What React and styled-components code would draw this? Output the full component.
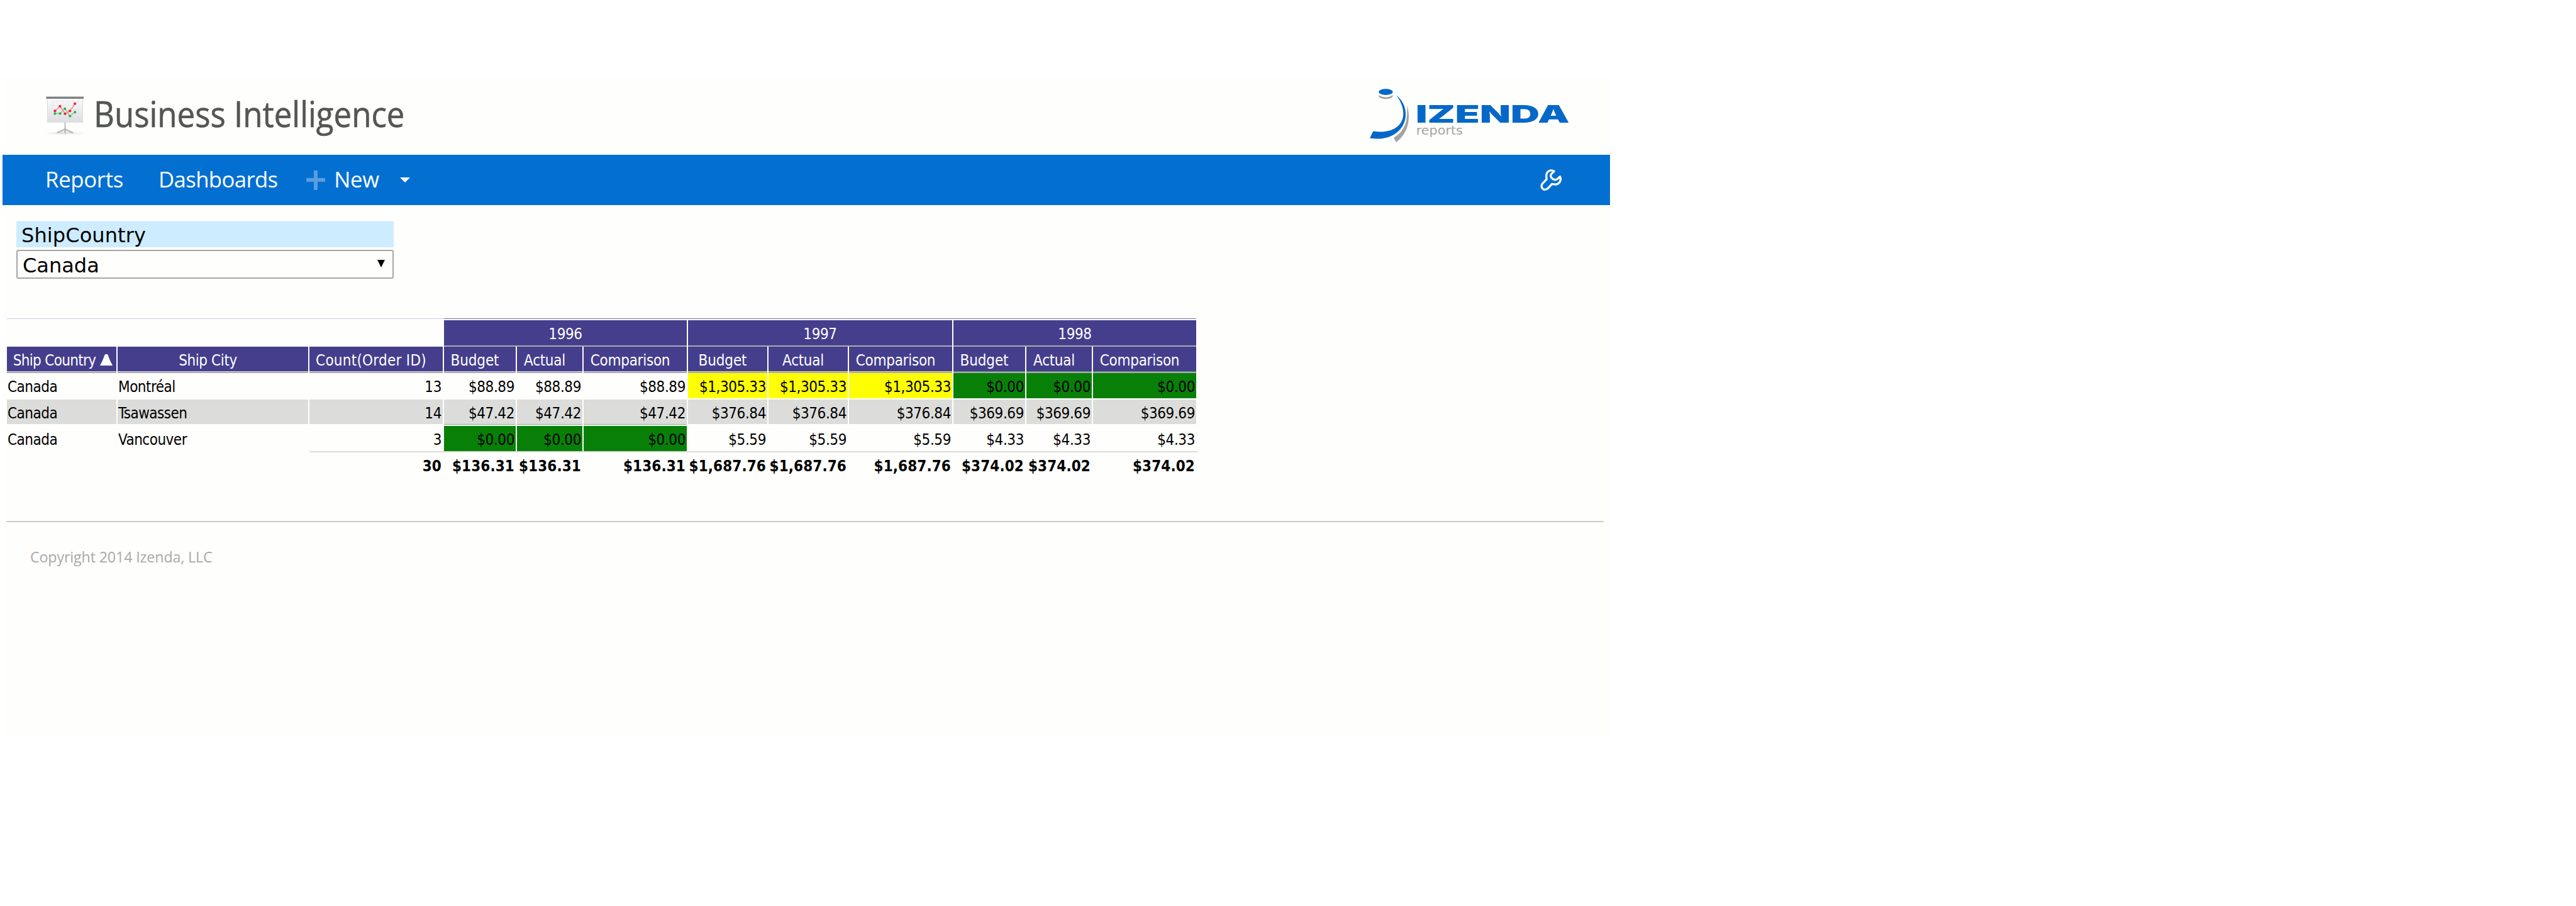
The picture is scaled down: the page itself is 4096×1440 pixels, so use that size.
import React from "react";
import styled, { createGlobalStyle } from "styled-components";

const sans = `"Open Sans", "Noto Sans", sans-serif`;
const grid = `"DejaVu Sans Condensed", "DejaVu Sans", sans-serif`;
const green = "#088008";
const yellow = "#ffff00";
const purple = "#453e8d";

const GlobalStyle = createGlobalStyle`
  *, *::before, *::after { box-sizing: border-box; }
  html, body { margin: 0; background: #fff; }
  svg { display: block; flex: none; }
`;

const Page = styled.div`
  width: 4096px;
  height: 1440px;
  padding: 123px 0 0 4px;
  overflow: hidden;
`;

const Panel = styled.main`
  display: flex;
  flex-direction: column;
  width: 2556px;
  height: 1049px;
  background: #fefefc;
`;

const Header = styled.header`
  display: flex;
  height: 123px;
  padding: 9px 66px 0 60px;
`;

const BoardIcon = styled.svg`
  margin-top: 12px;
`;

const Title = styled.h1`
  margin: -9px auto 0 1px;
  font: 400 56px/115px ${sans};
  color: #545653;
  white-space: nowrap;
  -webkit-text-stroke: 0.6px #545653;
  transform: scaleX(0.91);
  transform-origin: 0 0;
`;

const Nav = styled.nav`
  display: flex;
  align-items: center;
  height: 80px;
  padding: 0 64px 0 68px;
  background: #0370d1;
`;

const NavLink = styled.a`
  width: ${(p) => p.$width}px;
  height: 80px;
  font: 400 34.7px/77px ${sans};
  letter-spacing: ${(p) => p.$track}px;
  color: #fff;
`;

const PlusIcon = styled.svg`
  margin-right: 14px;
`;

const ToolsButton = styled.span`
  margin-left: auto;
`;

const Filter = styled.section`
  display: flex;
  flex-direction: column;
  gap: 4px;
  width: 600px;
  margin: 25px 0 0 22px;
  font-family: "DejaVu Sans", sans-serif;
  font-size: 32px;
  color: #000;
`;

const FilterLabel = styled.div`
  height: 42px;
  padding: 1px 0 0 8px;
  line-height: 42px;
  letter-spacing: 0.1px;
  border-top: 1px solid #dff3fd;
  background: #cdecff;
`;

const Select = styled.div`
  display: flex;
  justify-content: space-between;
  height: 46px;
  padding: 0 12px 0 8px;
  line-height: 46px;
  border: 2px solid #a6a8a6;
  border-radius: 3px;
`;

const SelectArrow = styled.svg`
  margin-top: 14px;
`;

const Report = styled.section`
  width: 1893px;
  margin: 63px 0 0 7px;
  font: 400 24px/44px ${grid};
  color: #000;
`;

const Row = styled.div`
  display: grid;
  grid-template-columns: 176px 305px 214px 116px 106px 166px 128px 128px 166px 116px 106px 166px;
  height: ${(p) => p.$height || 42}px;
`;

const TopRule = styled.div`
  grid-column: span ${(p) => p.$span};
  height: 1px;
  margin-right: ${(p) => (p.$dark ? 2 : 0)}px;
  background: ${(p) => (p.$dark ? "#7a70b4" : "#cfcce2")};
`;

const Blank = styled.div`
  grid-column: span 3;
`;

const Group = styled.div`
  grid-column: span 3;
  height: 42px;
  margin-right: 2px;
  border-bottom: 2px solid #ababab;
  background: ${purple};
  color: #fff;
  text-align: center;
  letter-spacing: -0.4px;
`;

const HeadCell = styled.div`
  display: flex;
  justify-content: center;
  height: 42px;
  margin-right: 2px;
  padding-right: ${(p) => (p.$sorted ? 0 : 16)}px;
  padding-left: ${(p) => (p.$sorted ? 4 : 0)}px;
  border-bottom: 2px solid #ababab;
  box-shadow: inset 0 -1px ${(p) => p.$edge || "#d6d3e6"};
  background: ${purple};
  color: #fff;
  white-space: nowrap;
  letter-spacing: ${(p) => p.$track}px;
`;

const SortArrow = styled.svg`
  margin: 12px 0 0 7px;
`;

const Cell = styled.div`
  height: ${(p) => (p.$edge || p.$fill ? 40 : 39)}px;
  margin-right: 2px;
  padding: 0 2px 0 ${(p) => (p.$left ? 1 : 0)}px;
  background: ${(p) => p.$fill || (p.$alt ? "#dcdddb" : "transparent")};
  border-bottom: ${(p) => (p.$edge ? "1px solid #79b779" : "0")};
  text-align: ${(p) => (p.$left ? "left" : "right")};
  letter-spacing: ${(p) => (p.$left ? -0.5 : -0.42)}px;
  white-space: nowrap;
`;

const TotalCell = styled.div`
  height: 42px;
  padding-right: 4px;
  margin-top: -2px;
  border-top: ${(p) => (p.$ruled ? "2px solid #dcdddb" : "0")};
  font-weight: 700;
  text-align: right;
  letter-spacing: 0.1px;
  white-space: nowrap;
`;

const Footer = styled.footer`
  width: 2540px;
  margin: 67px 0 0 6px;
  padding: 35px 0 0 38px;
  border-top: 2px solid #cacac9;
  font: 400 23.3px/40px ${sans};
  letter-spacing: -0.16px;
  color: #a9aaa8;
`;

function PresentationIcon() {
  return (
    <BoardIcon width="84" height="80" viewBox="0 0 315 300">
      <defs>
        <linearGradient id="board" x1="0" y1="0" x2="0" y2="1">
          <stop offset="0" stopColor="#fbfbfc" />
          <stop offset="1" stopColor="#dcdee2" />
        </linearGradient>
        <linearGradient id="bar" x1="0" y1="0" x2="0" y2="1">
          <stop offset="0" stopColor="#b4b6b5" />
          <stop offset="0.5" stopColor="#6f7270" />
          <stop offset="1" stopColor="#8d908e" />
        </linearGradient>
      </defs>
      <ellipse cx="148" cy="254" rx="110" ry="9" fill="#f3f3f2" />
      <ellipse cx="148" cy="252" rx="60" ry="6" fill="#e2e2e3" />
      <path d="M148 185v58" stroke="#c3c4c6" strokeWidth="9" />
      <path d="M148 230L104 250M148 230L192 250M148 226v26" stroke="#b3b4b7" strokeWidth="8" strokeLinecap="round" fill="none" />
      <rect x="43" y="46" width="209" height="142" fill="url(#board)" stroke="#dadcdf" strokeWidth="4" />
      <path d="M60 65h176M60 88h176M60 111h176M60 134h176M60 157h176M75 55v110M105 55v110M135 55v110M165 55v110M195 55v110M225 55v110" stroke="#dfe3ee" strokeWidth="2" />
      <rect x="35" y="35" width="224" height="14" rx="2" fill="url(#bar)" />
      <path d="M88 136h31l28-29 30 45 30-24" stroke="#8ccb90" strokeWidth="6" fill="none" />
      <path d="M88 121l30-28 30 45 30-17 29-43" stroke="#f58f95" strokeWidth="6" fill="none" />
      <g fill="#3fac47">
        <circle cx="88" cy="137" r="8" />
        <circle cx="118" cy="137" r="8" />
        <circle cx="147" cy="108" r="8" />
        <circle cx="177" cy="152" r="8" />
        <circle cx="207" cy="128" r="8" />
      </g>
      <g fill="#f0212d">
        <circle cx="88" cy="121" r="8" />
        <circle cx="118" cy="93" r="8" />
        <circle cx="148" cy="138" r="8" />
        <circle cx="177" cy="121" r="8" />
        <circle cx="207" cy="78" r="8" />
      </g>
    </BoardIcon>
  );
}

function Logo() {
  return (
    <svg width="326" height="96" viewBox="0 0 1222.5 360">
      <ellipse cx="133" cy="77" rx="42" ry="19" fill="#a3a5a3" />
      <ellipse cx="133" cy="65" rx="43" ry="19" fill="#fefefc" />
      <ellipse cx="133" cy="53" rx="42" ry="18" fill="#0568c8" />
      <path d="M196 72C228 98 253 140 252 188C250 275 170 350 38 328L58 287C150 303 228 268 237 195C241 150 222 108 196 72Z" fill="#0568c8" />
      <path d="M258 130C273 172 274 215 262 257C250 297 226 331 195 353L180 325C228 298 252 258 258 205C262 178 261 152 258 130Z" fill="#a3a5a3" />
      <text x="311" y="238" fontFamily="Inter, sans-serif" fontWeight="900" fontSize="144" fill="#0568c8" textLength="918" lengthAdjust="spacingAndGlyphs">IZENDA</text>
      <text x="314" y="306" fontFamily="DejaVu Sans, sans-serif" fontSize="75" fill="#a3a5a3" textLength="278" lengthAdjust="spacingAndGlyphs">reports</text>
    </svg>
  );
}

function WrenchIcon() {
  return (
    <svg width="56" height="48" viewBox="0 0 210 180">
      <path
        d="M117 38C104 30 86 32 77 44C69 54 69 70 72 86L47 112C38 124 41 138 52 145C62 150 72 147 80 140L104 114C122 119 140 117 149 104C156 94 157 80 152 70L134 86C124 92 114 88 108 83C98 78 93 66 99 56Z"
        fill="none"
        stroke="#fff"
        strokeWidth="12.5"
        strokeLinejoin="round"
      />
    </svg>
  );
}

const years = ["1996", "1997", "1998"];

const measures = [
  { label: "Budget", track: -0.15 },
  { label: "Actual", track: -0.3 },
  { label: "Comparison", track: -0.28 },
];

const edges = { 1996: undefined, 1997: "#e2dd6a", 1998: "#5b8f72" };

const rows = [
  {
    city: "Montréal",
    count: "13",
    values: { 1996: "$88.89", 1997: "$1,305.33", 1998: "$0.00" },
    fills: { 1997: yellow, 1998: green },
  },
  {
    city: "Tsawassen",
    count: "14",
    alt: true,
    values: { 1996: "$47.42", 1997: "$376.84", 1998: "$369.69" },
    fills: {},
    edge: "1996",
  },
  {
    city: "Vancouver",
    count: "3",
    values: { 1996: "$0.00", 1997: "$5.59", 1998: "$4.33" },
    fills: { 1996: green },
  },
];

const totals = { 1996: "$136.31", 1997: "$1,687.76", 1998: "$374.02" };

export default function App() {
  return (
    <Page>
      <GlobalStyle />
      <Panel>
        <Header>
          <PresentationIcon />
          <Title>Business Intelligence</Title>
          <Logo />
        </Header>

        <Nav>
          <NavLink $width={180} $track={-0.28}>Reports</NavLink>
          <NavLink $width={235.3} $track={-0.6}>Dashboards</NavLink>
          <PlusIcon width="30" height="31" viewBox="0 0 30 31">
            <path d="M12 0h6v12h12v6H18v13h-6V18H0v-6h12z" fill="#5a9cdf" />
          </PlusIcon>
          <NavLink $width={105} $track={-0.3}>New</NavLink>
          <svg width="16" height="8" viewBox="0 0 16 8">
            <path d="M0 0h16L8 8z" fill="#fff" />
          </svg>
          <ToolsButton>
            <WrenchIcon />
          </ToolsButton>
        </Nav>

        <Filter>
          <FilterLabel>ShipCountry</FilterLabel>
          <Select>
            Canada
            <SelectArrow width="12" height="12" viewBox="0 0 12 12">
              <path d="M0 0h12L6 12z" fill="#000" />
            </SelectArrow>
          </Select>
        </Filter>

        <Report>
          <Row $height={3}>
            <TopRule $span={3} />
            <TopRule $span={9} $dark />
          </Row>
          <Row>
            <Blank />
            {years.map((y) => (
              <Group key={y}>{y}</Group>
            ))}
          </Row>
          <Row>
            <HeadCell $sorted $track={-0.69}>
              Ship Country
              <SortArrow width="20" height="18" viewBox="0 0 20 18">
                <path d="M8 0h4l2 5 2 5 2 4 2 4H0l2-4 2-4 2-5z" fill="#fff" />
              </SortArrow>
            </HeadCell>
            <HeadCell $track={-0.4}>Ship City</HeadCell>
            <HeadCell $track={0.25}>Count(Order ID)</HeadCell>
            {years.map((y) =>
              measures.map((m) => (
                <HeadCell key={y + m.label} $track={m.track} $edge={edges[y]}>
                  {m.label}
                </HeadCell>
              ))
            )}
          </Row>
          {rows.map((r) => (
            <Row key={r.city}>
              <Cell $left $alt={r.alt}>Canada</Cell>
              <Cell $left $alt={r.alt}>{r.city}</Cell>
              <Cell $alt={r.alt}>{r.count}</Cell>
              {years.map((y) =>
                measures.map((m) => (
                  <Cell key={y + m.label} $alt={r.alt} $fill={r.fills[y]} $edge={r.edge === y}>
                    {r.values[y]}
                  </Cell>
                ))
              )}
            </Row>
          ))}
          <Row>
            <TotalCell />
            <TotalCell />
            <TotalCell $ruled>30</TotalCell>
            {years.map((y) =>
              measures.map((m) => (
                <TotalCell key={y + m.label} $ruled>
                  {totals[y]}
                </TotalCell>
              ))
            )}
          </Row>
        </Report>

        <Footer>Copyright 2014 Izenda, LLC</Footer>
      </Panel>
    </Page>
  );
}
